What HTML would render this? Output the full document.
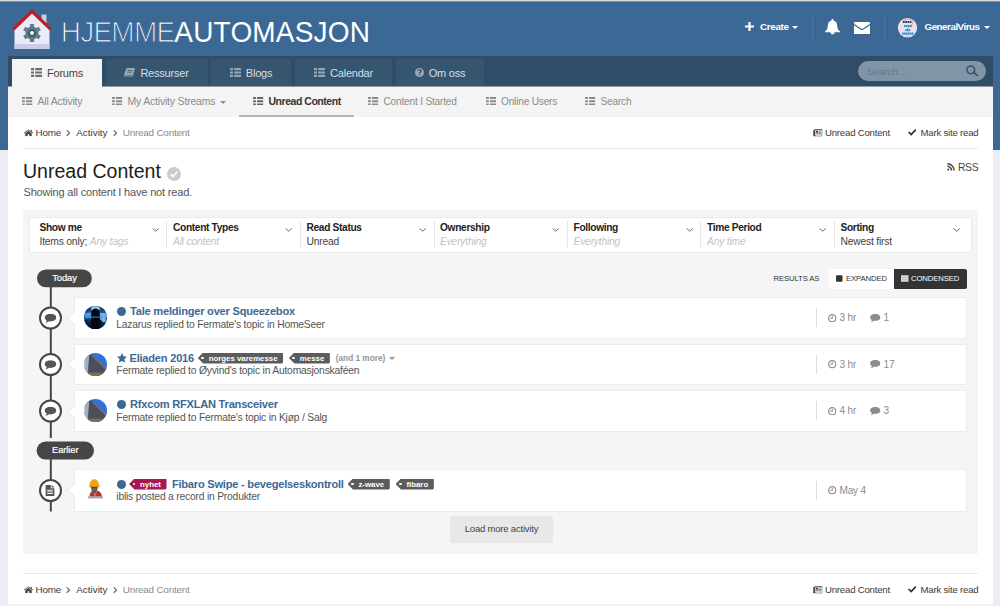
<!DOCTYPE html>
<html lang="no">
<head>
<meta charset="utf-8">
<title>Unread Content - Hjemmeautomasjon</title>
<style>
*{box-sizing:border-box;margin:0;padding:0}
html,body{width:1000px;height:606px;overflow:hidden}
body{font-family:"Liberation Sans",Arial,sans-serif;font-size:13px;color:#272a34;background:#eaedf3;position:relative}
a{color:inherit;text-decoration:none}
.abs{position:absolute}
#topline{left:0;top:0;width:1000px;height:2px;background:#dddbd9;border-bottom:1px solid #7591ae}
#header{left:0;top:1px;width:1000px;height:149px;background:#3b6895}
#logotext{left:60.8px;top:15.7px;font-size:28px;line-height:34px;color:#fff;white-space:nowrap;transform:scale(1,1.075);transform-origin:0 26px}
#logotext .bold{letter-spacing:.18px}
#logotext .thin{letter-spacing:-.78px;-webkit-text-stroke:1.15px #3b6895}
.un{color:#fff;font-size:9.8px;font-weight:bold;white-space:nowrap;line-height:14px;letter-spacing:-.3px}
.caret{display:inline-block;width:0;height:0;border-left:3px solid transparent;border-right:3px solid transparent;border-top:3.5px solid currentColor;vertical-align:middle;margin-left:3.5px}
.vsep{width:1px;height:26px;background:#4a75a0;top:14px}
#navbar{left:8px;top:56px;width:985px;height:30px;background:#304d68}
.tab{top:3px;height:27px;background:#36566f;color:#d8dfe6;font-size:11px;letter-spacing:-.21px;line-height:28px;text-align:center;white-space:nowrap}
.tab.active{background:#f4f4f4;color:#444;height:28px;z-index:3}
.tab svg{color:#98a7b6;vertical-align:-.3px;margin-right:5px}
.tab.active svg{color:#6e6e6e}
#search{left:850px;top:5px;width:128px;height:20px;border-radius:10px;background:#8294a7}
#search span{position:absolute;left:9px;top:.5px;line-height:20px;font-size:9.75px;color:#62768a}
#subnav{left:8px;top:86px;width:985px;height:31px;background:#f4f4f4;border-top:1px solid #929ba6}
.sub{top:0;height:30px;line-height:28.6px;font-size:10.5px;letter-spacing:-.2px;color:#8b8b8b;white-space:nowrap}
.sub svg{vertical-align:-.2px;margin-right:5px}
.sub.on{color:#333;font-weight:bold;letter-spacing:-.47px;border-bottom:2px solid #b5b5b5}
.sub.on svg{color:#666}
#main{left:8px;top:117px;width:985px;height:487px;background:#fff;border-bottom:1px solid #f4f5f9;box-sizing:content-box}
.crumb{font-size:9.9px;letter-spacing:-.2px;line-height:14px;color:#3a3a3a;white-space:nowrap}
.crumb .sep{margin:0 5.8px 0 5px;vertical-align:-.5px}
.crumb.r{font-size:9.6px}
.crumb .last{color:#8a8a8a}
.hr{height:1px;background:#e9e9e9}
h1{font-weight:normal;font-size:19.55px;line-height:28px;color:#1c1c1c;white-space:nowrap}
.desc{font-size:11.05px;letter-spacing:-.2px;line-height:14px;color:#555;white-space:nowrap}
#box{left:23px;top:210px;width:955px;height:344px;background:#f5f5f5}
#filter{left:29px;top:217px;width:943px;height:36px;background:#fff;border:1px solid #e9e9e9}
.fc{top:0;height:33px}
.fc b{position:absolute;left:0;top:2.5px;font-size:10.2px;letter-spacing:-.34px;line-height:13px;color:#222;white-space:nowrap}
.fc span{position:absolute;left:0;top:16.6px;font-size:10.3px;letter-spacing:-.2px;line-height:13px;color:#444;white-space:nowrap}
.fc i{color:#c3c3c3}
.fc .chev{position:absolute;top:10.3px}
.fsep{top:3px;width:1px;height:27px;background:#e9e9e9}
.pilltxt{color:#fff;font-size:9.4px;letter-spacing:-.1px;line-height:12px;text-align:center;-webkit-text-stroke:.2px #fff}
.item{left:74px;width:893px;background:#fff;border:1px solid #ececec}
.item .av{position:absolute;left:9px;width:23px;height:23px;border-radius:12px;overflow:hidden}
.item .ttl{position:absolute;left:41.5px;font-size:11.1px;letter-spacing:-.23px;font-weight:bold;line-height:14px;color:#3c6994;white-space:nowrap}
.item .meta{position:absolute;left:41.3px;font-size:10.3px;letter-spacing:-.2px;line-height:14px;color:#555;white-space:nowrap}
.item .isep{position:absolute;left:741px;width:1px;height:19px;background:#ddd}
.item .st{position:absolute;font-size:10.1px;letter-spacing:-.2px;line-height:14px;color:#8c8c8c;white-space:nowrap}
.dot{display:inline-block;width:9px;height:9px;border-radius:5px;background:#3c6994;vertical-align:-1px;margin-right:4.5px}
.tag{display:inline-block;position:relative;height:11px;line-height:11px;font-size:7.85px;letter-spacing:0;font-weight:bold;color:#fff;background:#5c5c5c;padding:0 5.6px 0 10.9px;margin-left:5.8px;vertical-align:1px;clip-path:polygon(5.4px 0,calc(100% - 1px) 0,100% 1px,100% calc(100% - 1px),calc(100% - 1px) 100%,5.4px 100%,0 50%)}
.tag.f{margin-left:3.8px}
.tag:after{content:"";position:absolute;left:3.4px;top:4.2px;width:2.6px;height:2.6px;border-radius:2px;background:#fff}
.tag.red{background:#a8174f}
.more{letter-spacing:0;font-size:8.25px;color:#959595;margin-left:5.9px;vertical-align:1px}
#loadmore{left:450px;top:516px;width:103px;height:27px;border-radius:3px;background:#e8e8e8;color:#444;font-size:9.5px;letter-spacing:-.2px;line-height:26px;text-align:center}
.tog{top:269px;height:20px;font-size:7.7px;letter-spacing:-.1px;line-height:20px;white-space:nowrap;color:#333}
</style>
</head>
<body>
<div id="header" class="abs"></div>
<div id="topline" class="abs"></div>
<svg width="0" height="0" style="position:absolute">
<defs>
<symbol id="i-list" viewBox="0 0 11 9"><path d="M0 0h3v2.200H0zM4.200 0H11v2.200H4.200zM0 3.400h3v2.200H0zM4.200 3.400H11v2.200H4.200zM0 6.800h3V9H0zM4.200 6.800H11V9H4.200z"/></symbol>
<symbol id="i-book" viewBox="0 0 11 9"><path d="M3.200 0H10.600c.3 0 .5.3.4.6L9 7.600c-.2.600-.6.900-1.200.900H1.200C.3 8.500-.2 7.800.1 7L2 1C2.200.4 2.600 0 3.200 0zM3.900 2.100l-.2.700h4.500l.2-.7zM3.400 3.700l-.2.700h4.500l.2-.7zM1 7c0 .4.200.6.600.6h6c.3 0 .5-.2.600-.5L10 1.500 8.400 6.300c-.1.400-.4.600-.8.600z"/></symbol>
<symbol id="i-q" viewBox="0 0 10 10"><path fill-rule="evenodd" d="M5 0a5 5 0 1 0 0 10A5 5 0 0 0 5 0zm.7 8.200H4.300V6.900h1.400zM6.900 4.600c-.5.400-1.100.7-1.100 1.500H4.300c0-1.300.6-1.800 1.200-2.200.4-.3.600-.5.600-.8 0-.4-.4-.7-1-.7-.7 0-1.100.4-1.200 1L2.500 3.200C2.700 2 3.700 1.300 5.100 1.300c1.500 0 2.500.7 2.500 1.800 0 .7-.3 1.200-.7 1.500z"/></symbol>
<symbol id="i-home" viewBox="0 0 10 8"><path d="M5 0L0 4.100l.5.600L5 1l4.500 3.700.5-.6L8.600 3V.6H7.400v1.400zM5 1.900L1.400 4.900V8h2.700V5.600h1.800V8h2.700V4.900z"/></symbol>
<symbol id="i-news" viewBox="0 0 10 8"><path fill-rule="evenodd" d="M1.600 0H10v7.200c0 .4-.3.800-.8.800H.9C.4 8 0 7.600 0 7.100V1.400h1.600zm.8.800v6.400h6.800V.8zM.8 2.200v4.900c0 .1.100.1.100.1.100 0 .1 0 .1-.1V2.200zM3.200 1.600h2.400v2.400H3.200zM6.400 1.600h2v.8h-2zM6.400 3.200h2V4h-2zM3.200 4.800h5.200v.8H3.200z"/></symbol>
<symbol id="i-check" viewBox="0 0 10 8"><path d="M3.700 7.800L0 4.100l1.400-1.400 2.300 2.300L8.600 0 10 1.400z"/></symbol>
<symbol id="i-rss" viewBox="0 0 8 8"><path d="M1.100 5.800a1.100 1.100 0 1 0 0 2.200 1.100 1.100 0 0 0 0-2.200zM0 2.700v1.500c2.100 0 3.800 1.700 3.800 3.800h1.500C5.300 5.100 2.900 2.700 0 2.700zM0 0v1.500c3.600 0 6.500 2.900 6.500 6.500H8C8 3.600 4.400 0 0 0z"/></symbol>
<symbol id="i-chev" viewBox="0 0 8 5"><path d="M.7.600L4 3.800 7.300.6" fill="none" stroke="currentColor" stroke-width="1.050"/></symbol>
<symbol id="i-clock" viewBox="0 0 10 10"><path fill-rule="evenodd" d="M5 0a5 5 0 1 0 0 10A5 5 0 0 0 5 0zm0 1.500a3.500 3.500 0 1 1 0 7 3.500 3.500 0 0 1 0-7zM4.400 2.400h1.200v3.200H2.900V4.500h1.500z"/></symbol>
<symbol id="i-comment" viewBox="0 0 11 9"><path d="M5.500 0C2.500 0 0 1.600 0 3.600c0 1.100.8 2.100 2 2.800-.2.800-.7 1.500-1.400 2.100 1.400-.1 2.600-.6 3.500-1.400.4.100.9.100 1.400.1 3 0 5.500-1.600 5.500-3.600S8.500 0 5.500 0z"/></symbol>
<symbol id="i-star" viewBox="0 0 10 10"><path d="M5 0l1.500 3.300 3.500.4-2.600 2.400.7 3.500L5 7.900 1.900 9.600l.7-3.500L0 3.700l3.500-.4z"/></symbol>
<symbol id="i-file" viewBox="0 0 8 10"><path fill-rule="evenodd" d="M0 0h4.700v2.900H8V10H0zM5.400 0L8 2.300H5.400zM1.600 4.400v.8h4.800v-.8zM1.600 5.900v.8h4.800v-.8zM1.600 7.400v.8h4.800v-.8z"/></symbol>
<symbol id="i-bell" viewBox="0 0 15 16"><path d="M7.500 0c-.6 0-1 .4-1 1v.5C4.200 2 2.800 4 2.800 6.500c0 3.300-1.100 4.700-2.800 6v.7h5.400c0 1.200.9 2.100 2.100 2.100s2.100-.9 2.100-2.100H15v-.7c-1.700-1.300-2.800-2.700-2.800-6C12.200 4 10.800 2 8.500 1.500V1c0-.6-.4-1-1-1z"/></symbol>
<symbol id="i-env" viewBox="0 0 16 13"><path d="M1.300 0h13.400c.7 0 1.300.6 1.300 1.300v.5L9.100 6.700c-.7.500-1.500.5-2.200 0L0 1.800v-.5C0 .6.600 0 1.300 0zM0 3.300l6.300 4.500c1 .7 2.400.7 3.400 0L16 3.300v8.400c0 .7-.6 1.300-1.300 1.300H1.300C.6 13 0 12.400 0 11.700z"/></symbol>
<symbol id="i-search" viewBox="0 0 12 11"><circle cx="4.600" cy="4.600" r="3.700" fill="none" stroke="currentColor" stroke-width="1.500"/><path d="M7.300 7.100l3.800 3.200" stroke="currentColor" stroke-width="1.700" stroke-linecap="round"/></symbol>
</defs></svg>
<svg class="abs" viewBox="0 0 40 42" style="left:11.5px;top:9px;width:40px;height:42px">
<rect x="29.500" y="5.500" width="5" height="11" fill="#c9cbe8"/>
<path d="M2.500 20.800L20 3.300 37.500 20.800V40H2.500z" fill="#ebebf8"/>
<rect x="2.500" y="35" width="35" height="5" fill="#c9cbe8"/>
<path d="M1.300 20.300L20 2.300 38.700 20.300" fill="none" stroke="#c21a1e" stroke-width="3"/>
<g transform="translate(20 24)">
<g fill="#607d8b">
<circle r="6.600"/>
<rect x="-2.100" y="-9" width="4.200" height="18" rx=".6"/>
<rect x="-2.100" y="-9" width="4.200" height="18" rx=".6" transform="rotate(60)"/>
<rect x="-2.100" y="-9" width="4.200" height="18" rx=".6" transform="rotate(120)"/>
</g>
<circle r="4" fill="#455a64"/>
<circle r="2" fill="#f1f1fa"/>
</g>
</svg>
<div id="logotext" class="abs"><span class="thin">HJEMME</span><span class="bold">AUTOMASJON</span></div>
<div class="abs un" style="left:745px;top:20px"><svg width="9" height="9" viewBox="0 0 9 9" style="vertical-align:-1px;margin-right:6px"><path d="M3.400 0h2.200v3.400H9v2.200H5.600V9H3.400V5.600H0V3.400h3.400z" fill="#fff"/></svg><span>Create</span><span class="caret"></span></div>
<div class="abs vsep" style="left:812px"></div>
<svg class="abs" style="left:825px;top:19px;width:15px;height:16px;fill:#fff"><use href="#i-bell"/></svg>
<svg class="abs" style="left:854px;top:21.5px;width:16px;height:12.600px;fill:#fff" viewBox="0 0 16 13" preserveAspectRatio="none"><use href="#i-env"/></svg>
<div class="abs vsep" style="left:884px"></div>
<svg class="abs" style="left:896px;top:16px;width:24px;height:24px" viewBox="896 16 24 24"><circle cx="907.500" cy="27.800" r="9.700" fill="#e6e3ea"/><path d="M902.800 22.500c.5-2.500 3-3.500 5.500-3.300 2.800.2 4.500 1.800 4.200 4-.3 2-2.500 2.700-3.800 3.900-1 .9-1.300 1.800-1.300 3.300" fill="none" stroke="#f0a3ab" stroke-width="1.300"/><circle cx="907.300" cy="35.800" r=".9" fill="#f0a3ab"/><path d="M903 22h8.800" stroke="#2a3d6e" stroke-width="2.200" stroke-dasharray="1.700 .5"/><path d="M904 26h7.700" stroke="#2b8fc8" stroke-width="2.200" stroke-dasharray="1.600 .45"/><path d="M905.200 30.200h5" stroke="#1f8fd0" stroke-width="2.200" stroke-dasharray="1.400 .4"/><path d="M902.200 33.700h11.200" stroke="#2389c6" stroke-width="2.200" stroke-dasharray="1.500 .45"/></svg>
<div class="abs un" style="left:924.5px;top:20px"><span style="letter-spacing:-.48px">GeneralVirus</span><span class="caret" style="margin-left:4.500px"></span></div>
<div id="navbar" class="abs"><a class="abs tab active" style="left:4px;width:90px"><svg width="11" height="9" fill="currentColor"><use href="#i-list"/></svg><span>Forums</span></a><a class="abs tab" style="left:97.5px;width:102px"><svg width="11" height="9" fill="currentColor"><use href="#i-book"/></svg><span>Ressurser</span></a><a class="abs tab" style="left:203px;width:80px"><svg width="11" height="9" fill="currentColor"><use href="#i-list"/></svg><span>Blogs</span></a><a class="abs tab" style="left:287px;width:97px"><svg width="11" height="9" fill="currentColor"><use href="#i-list"/></svg><span>Calendar</span></a><a class="abs tab" style="left:388px;width:88px"><svg width="9" height="9" fill="currentColor"><use href="#i-q"/></svg><span>Om oss</span></a><div id="search" class="abs"><span>Search...</span><svg class="abs" style="left:108px;top:3.7px;width:12.5px;height:11.5px;color:#3a5167"><use href="#i-search"/></svg></div></div>
<div id="subnav" class="abs"><a class="abs sub" style="left:14px"><svg width="10.5" height="8.5" fill="currentColor" viewBox="0 0 11 9"><use href="#i-list"/></svg><span>All Activity</span></a><a class="abs sub" style="left:104px"><svg width="10.5" height="8.5" fill="currentColor" viewBox="0 0 11 9"><use href="#i-list"/></svg><span>My Activity Streams</span><span class="caret" style="margin-left:4.7px"></span></a><a class="abs sub on" style="left:231px;width:115px;padding-left:14px"><svg width="10.5" height="8.5" fill="currentColor" viewBox="0 0 11 9"><use href="#i-list"/></svg><span>Unread Content</span></a><a class="abs sub" style="left:360px;font-size:10.15px;line-height:30.6px"><svg width="10.5" height="8.5" fill="currentColor" viewBox="0 0 11 9"><use href="#i-list"/></svg><span>Content I Started</span></a><a class="abs sub" style="left:477.5px;font-size:10.15px;line-height:30.6px"><svg width="10.5" height="8.5" fill="currentColor" viewBox="0 0 11 9"><use href="#i-list"/></svg><span>Online Users</span></a><a class="abs sub" style="left:577px;font-size:10.15px;line-height:30.6px"><svg width="10.5" height="8.5" fill="currentColor" viewBox="0 0 11 9"><use href="#i-list"/></svg><span>Search</span></a></div>
<div id="main" class="abs"></div>
<div class="abs crumb" style="left:23.5px;top:126px"><svg width="9" height="7.500" viewBox="0 0 10 8" fill="#444" style="vertical-align:-.5px;margin-right:3px"><use href="#i-home"/></svg><span>Home</span><svg class="sep" width="4.400" height="6.200" viewBox="0 0 4.400 6.200"><path d="M.7.400l2.900 2.700L.7 5.800" fill="none" stroke="#606060" stroke-width="1.150"/></svg><span style="letter-spacing:0">Activity</span><svg class="sep" width="4.400" height="6.200" viewBox="0 0 4.400 6.200"><path d="M.7.400l2.900 2.700L.7 5.800" fill="none" stroke="#606060" stroke-width="1.150"/></svg><span class="last">Unread Content</span></div>
<div class="abs crumb r" style="left:813px;top:126px"><svg width="9.500" height="7.500" viewBox="0 0 10 8" fill="#444" style="vertical-align:-.5px;margin-right:2.500px"><use href="#i-news"/></svg><span>Unread Content</span></div>
<div class="abs crumb r" style="left:907.5px;top:126px"><svg width="8.500" height="7" viewBox="0 0 10 8" fill="#333" style="vertical-align:0;margin-right:4.500px"><use href="#i-check"/></svg><span>Mark site read</span></div>
<div class="abs hr" style="left:23px;top:148px;width:955px"></div>
<h1 class="abs" style="left:23px;top:156.6px">Unread Content</h1>
<svg class="abs" style="left:167px;top:166.5px;width:14px;height:14px" viewBox="0 0 14 14"><circle cx="7" cy="7" r="7" fill="#cbcbcb"/><path d="M3.600 7.200l2.300 2.300 4.400-4.600" fill="none" stroke="#fff" stroke-width="1.700"/></svg>
<div class="abs desc" style="left:23.5px;top:185px">Showing all content I have not read.</div>
<div class="abs" style="left:946.7px;top:160.5px;font-size:10.3px;line-height:14px;color:#444;white-space:nowrap;letter-spacing:-.3px"><svg width="8.100" height="7.700" viewBox="0 0 8 8" fill="#444" style="margin-right:3.2px;vertical-align:-.3px"><use href="#i-rss"/></svg>RSS</div>
<div id="box" class="abs"></div>
<div id="filter" class="abs"><div class="abs fc" style="left:9.5px;width:124px"><b>Show me</b><span>Items only; <i><em>Any tags</em></i></span><svg class="chev" style="left:112.2px;color:#5a5a5a" width="7.400" height="4.200" viewBox="0 0 8 5" preserveAspectRatio="none"><use href="#i-chev"/></svg></div><div class="abs fsep" style="left:136px"></div><div class="abs fc" style="left:143.0px;width:124px"><b>Content Types</b><span><i><em>All content</em></i></span><svg class="chev" style="left:112.2px;color:#5a5a5a" width="7.400" height="4.200" viewBox="0 0 8 5" preserveAspectRatio="none"><use href="#i-chev"/></svg></div><div class="abs fsep" style="left:270px"></div><div class="abs fc" style="left:276.5px;width:124px"><b>Read Status</b><span>Unread</span><svg class="chev" style="left:112.2px;color:#5a5a5a" width="7.400" height="4.200" viewBox="0 0 8 5" preserveAspectRatio="none"><use href="#i-chev"/></svg></div><div class="abs fsep" style="left:404px"></div><div class="abs fc" style="left:410.0px;width:124px"><b>Ownership</b><span><i><em>Everything</em></i></span><svg class="chev" style="left:112.2px;color:#5a5a5a" width="7.400" height="4.200" viewBox="0 0 8 5" preserveAspectRatio="none"><use href="#i-chev"/></svg></div><div class="abs fsep" style="left:537px"></div><div class="abs fc" style="left:543.5px;width:124px"><b>Following</b><span><i><em>Everything</em></i></span><svg class="chev" style="left:112.2px;color:#5a5a5a" width="7.400" height="4.200" viewBox="0 0 8 5" preserveAspectRatio="none"><use href="#i-chev"/></svg></div><div class="abs fsep" style="left:670px"></div><div class="abs fc" style="left:677.0px;width:124px"><b>Time Period</b><span><i><em>Any time</em></i></span><svg class="chev" style="left:112.2px;color:#5a5a5a" width="7.400" height="4.200" viewBox="0 0 8 5" preserveAspectRatio="none"><use href="#i-chev"/></svg></div><div class="abs fsep" style="left:804px"></div><div class="abs fc" style="left:810.5px;width:124px"><b>Sorting</b><span>Newest first</span><svg class="chev" style="left:112.2px;color:#5a5a5a" width="7.400" height="4.200" viewBox="0 0 8 5" preserveAspectRatio="none"><use href="#i-chev"/></svg></div></div>
<svg class="abs" style="left:0;top:260px;width:110px;height:260px" viewBox="0 260 110 260"><rect x="49.800" y="280" width="2" height="158" fill="#464646"/><rect x="49.800" y="452" width="2" height="59.500" fill="#464646"/><rect x="37" y="269.5" width="54.8" height="17.80000000000001" rx="8.900000000000006" fill="#464646"/><rect x="36.6" y="441.6" width="57.4" height="18.0" rx="9.0" fill="#464646"/><circle cx="50.500" cy="318" r="10.500" fill="#fff" stroke="#464646" stroke-width="2"/><svg x="44.500" y="313.7" width="12" height="9.600" viewBox="0 0 11 9" fill="#555"><use href="#i-comment"/></svg><circle cx="50.500" cy="364.5" r="10.500" fill="#fff" stroke="#464646" stroke-width="2"/><svg x="44.500" y="360.2" width="12" height="9.600" viewBox="0 0 11 9" fill="#555"><use href="#i-comment"/></svg><circle cx="50.500" cy="411" r="10.500" fill="#fff" stroke="#464646" stroke-width="2"/><svg x="44.500" y="406.7" width="12" height="9.600" viewBox="0 0 11 9" fill="#555"><use href="#i-comment"/></svg><circle cx="50.500" cy="490.5" r="10.500" fill="#fff" stroke="#464646" stroke-width="2"/><svg x="45.400" y="485.1" width="9.200" height="10.800" viewBox="0 0 8 10" preserveAspectRatio="none" fill="#555"><use href="#i-file"/></svg></svg>
<div class="abs pilltxt" style="left:37px;top:272px;width:55px">Today</div>
<div class="abs pilltxt" style="left:36.5px;top:444px;width:57.5px">Earlier</div>
<div class="abs tog" style="left:773.5px">RESULTS AS</div>
<div class="abs tog" style="left:829px;width:65px;background:#fff;border-radius:2px 0 0 2px;padding-left:7px"><svg width="6.500" height="7" viewBox="0 0 7 7" style="margin-right:3.500px;vertical-align:-1px"><rect width="7" height="7" rx="1.200" fill="#333"/></svg>EXPANDED</div>
<div class="abs tog" style="left:894px;width:73px;background:#333;color:#fff;border-radius:0 2px 2px 0;padding-left:7px"><svg width="7.500" height="7" viewBox="0 0 8 7" style="margin-right:2.500px;vertical-align:-1px"><rect width="8" height="7" fill="#d6d6e2"/><path d="M0 2.300h8M0 4.600h8" stroke="#bcbcd0" stroke-width=".6"/></svg>CONDENSED</div>
<div class="abs item" style="top:297px;height:42px"><svg class="av" style="top:8.3px" viewBox="0 0 24 24"><rect width="24" height="24" fill="#15508f"/><ellipse cx="12" cy="2.500" rx="4.500" ry="2.200" fill="#a9cff2"/><ellipse cx="5.500" cy="9.800" rx="5" ry="3" fill="#4f97dc"/><ellipse cx="19" cy="10" rx="5" ry="3" fill="#6fb0ea"/><ellipse cx="19.500" cy="14.500" rx="3.500" ry="2.600" fill="#9cc6ee" opacity=".8"/><path d="M0 0h9L4 5 0 7zM24 0h-9l4 4 5 2z" fill="#0a2348" opacity=".8"/><path d="M0 24V15l5-2v11zM24 24v-5l-4-2.500V24z" fill="#0a2449"/><path d="M3.500 24C4 17 6.500 14 8 13.500h8c3 1 4.200 4 4.500 10.500z" fill="#0a1c36"/><path d="M7.500 24V9C7.500 4.500 9.500 2.500 12 2.500s4.500 2 4.500 6.500v15z" fill="#030812"/><rect x="4.500" y="11" width="15" height="1.200" fill="#2f80d8" opacity=".9"/></svg><div class="ttl" style="top:6px"><span class="dot"></span>Tale meldinger over Squeezebox</div><div class="meta" style="top:19.5px">Lazarus replied to Fermate's topic in HomeSeer</div><div class="isep" style="top:10px"></div><div class="st" style="left:753px;top:13px"><svg width="8.500" height="8.500" viewBox="0 0 10 10" fill="#8c8c8c" style="vertical-align:-1px;margin-right:3px"><use href="#i-clock"/></svg>3 hr</div><div class="st" style="left:795px;top:13px"><svg width="10.500" height="8.500" viewBox="0 0 11 9" fill="#8c8c8c" style="vertical-align:-1px;margin-right:3px"><use href="#i-comment"/></svg>1</div></div><svg class="abs" style="left:66.5px;top:310.5px;width:9px;height:15px" viewBox="0 0 9 15"><path d="M9 .5L1 7.500l8 7z" fill="#fff"/><path d="M8.500 .5L1.200 7.500l7.300 7" fill="none" stroke="#e9e9e9" stroke-width="1"/></svg>
<div class="abs item" style="top:344px;height:41px"><svg class="av" style="top:7.800000000000001px" viewBox="0 0 24 24"><rect width="24" height="24" fill="#2f72dc"/><path d="M0 24V4l5.500-2L4 24z" fill="#a9abb3"/><path d="M5.500 2l3-.5L24 17v7H4z" fill="#4b4e5b"/><path d="M7.500 2.500L10 3l14 12.500V19z" fill="#6d707b"/><rect y="20.500" width="24" height="3.500" fill="#6f7a4a"/><path d="M0 24V9l1.500-1L1 24z" fill="#c9cad0"/></svg><div class="ttl" style="top:5.5px"><svg width="10" height="10" viewBox="0 0 10 10" fill="#3c6994" style="vertical-align:-1px;margin-right:3px"><use href="#i-star"/></svg>Eliaden 2016<span class="tag f">norges varemesse</span><span class="tag">messe</span><span class="more">(and 1 more)<span class="caret"></span></span></div><div class="meta" style="top:19.0px">Fermate replied to Øyvind's topic in Automasjonskaféen</div><div class="isep" style="top:10px"></div><div class="st" style="left:753px;top:12.5px"><svg width="8.500" height="8.500" viewBox="0 0 10 10" fill="#8c8c8c" style="vertical-align:-1px;margin-right:3px"><use href="#i-clock"/></svg>3 hr</div><div class="st" style="left:795px;top:12.5px"><svg width="10.500" height="8.500" viewBox="0 0 11 9" fill="#8c8c8c" style="vertical-align:-1px;margin-right:3px"><use href="#i-comment"/></svg>17</div></div><svg class="abs" style="left:66.5px;top:357.0px;width:9px;height:15px" viewBox="0 0 9 15"><path d="M9 .5L1 7.500l8 7z" fill="#fff"/><path d="M8.500 .5L1.200 7.500l7.300 7" fill="none" stroke="#e9e9e9" stroke-width="1"/></svg>
<div class="abs item" style="top:390px;height:42px"><svg class="av" style="top:8.3px" viewBox="0 0 24 24"><rect width="24" height="24" fill="#2f72dc"/><path d="M0 24V4l5.500-2L4 24z" fill="#a9abb3"/><path d="M5.500 2l3-.5L24 17v7H4z" fill="#4b4e5b"/><path d="M7.500 2.500L10 3l14 12.500V19z" fill="#6d707b"/><rect y="20.500" width="24" height="3.500" fill="#6f7a4a"/><path d="M0 24V9l1.500-1L1 24z" fill="#c9cad0"/></svg><div class="ttl" style="top:6px"><span class="dot"></span>Rfxcom RFXLAN Transceiver</div><div class="meta" style="top:19.5px">Fermate replied to Fermate's topic in Kjøp / Salg</div><div class="isep" style="top:10px"></div><div class="st" style="left:753px;top:13px"><svg width="8.500" height="8.500" viewBox="0 0 10 10" fill="#8c8c8c" style="vertical-align:-1px;margin-right:3px"><use href="#i-clock"/></svg>4 hr</div><div class="st" style="left:795px;top:13px"><svg width="10.500" height="8.500" viewBox="0 0 11 9" fill="#8c8c8c" style="vertical-align:-1px;margin-right:3px"><use href="#i-comment"/></svg>3</div></div><svg class="abs" style="left:66.5px;top:403.5px;width:9px;height:15px" viewBox="0 0 9 15"><path d="M9 .5L1 7.500l8 7z" fill="#fff"/><path d="M8.500 .5L1.200 7.500l7.300 7" fill="none" stroke="#e9e9e9" stroke-width="1"/></svg>
<div class="abs item" style="top:469px;height:43px"><svg class="abs" viewBox="80 474 32 32" style="left:5px;top:4px;width:32px;height:32px"><path d="M89.500 496.500c.2-3.500 1.500-5 3-5.500l2 4 2.500-4.500c3 .5 4.500 2.500 5 6z" fill="#c32a2a"/><path d="M97 490.500l-2 5.500" stroke="#b58a5a" stroke-width="1" fill="none"/><rect x="91.200" y="486.500" width="6.400" height="3.500" fill="#c99c78"/><path d="M91.300 489.300h6l-1 3.200-2 1.700-2-1.700z" fill="#6b5a4c"/><rect x="91.200" y="487" width="6.200" height="1.600" fill="#2b2b30"/><path d="M89.500 486.500c0-5 2-7.200 4.800-7.200 2.900 0 4.700 2.200 4.700 7.200z" fill="#eea51e"/><rect x="89" y="485.800" width="10.600" height="1.400" rx=".7" fill="#d99414"/><rect x="88" y="496.400" width="15" height="2" fill="#8d8d8d" opacity=".8"/></svg><div class="ttl" style="top:6.5px"><span class="dot"></span><span class="tag red" style="margin-left:-.9px;margin-right:5.4px">nyhet</span>Fibaro Swipe - bevegelseskontroll<span class="tag f">z-wave</span><span class="tag">fibaro</span></div><div class="meta" style="top:20.0px">iblis posted a record in Produkter</div><div class="isep" style="top:11px"></div><div class="st" style="left:753px;top:13.5px"><svg width="8.500" height="8.500" viewBox="0 0 10 10" fill="#8c8c8c" style="vertical-align:-1px;margin-right:3px"><use href="#i-clock"/></svg>May 4</div></div><svg class="abs" style="left:66.5px;top:483.0px;width:9px;height:15px" viewBox="0 0 9 15"><path d="M9 .5L1 7.500l8 7z" fill="#fff"/><path d="M8.500 .5L1.200 7.500l7.300 7" fill="none" stroke="#e9e9e9" stroke-width="1"/></svg>
<div id="loadmore" class="abs">Load more activity</div>
<div class="abs hr" style="left:23px;top:573px;width:955px"></div>
<div class="abs crumb" style="left:23.5px;top:583px"><svg width="9" height="7.500" viewBox="0 0 10 8" fill="#444" style="vertical-align:-.5px;margin-right:3px"><use href="#i-home"/></svg><span>Home</span><svg class="sep" width="4.400" height="6.200" viewBox="0 0 4.400 6.200"><path d="M.7.400l2.900 2.700L.7 5.800" fill="none" stroke="#606060" stroke-width="1.150"/></svg><span style="letter-spacing:0">Activity</span><svg class="sep" width="4.400" height="6.200" viewBox="0 0 4.400 6.200"><path d="M.7.400l2.900 2.700L.7 5.800" fill="none" stroke="#606060" stroke-width="1.150"/></svg><span class="last">Unread Content</span></div>
<div class="abs crumb r" style="left:813px;top:583px"><svg width="9.500" height="7.500" viewBox="0 0 10 8" fill="#444" style="vertical-align:-.5px;margin-right:2.500px"><use href="#i-news"/></svg><span>Unread Content</span></div>
<div class="abs crumb r" style="left:907.5px;top:583px"><svg width="8.500" height="7" viewBox="0 0 10 8" fill="#333" style="vertical-align:0;margin-right:4.500px"><use href="#i-check"/></svg><span>Mark site read</span></div>
</body>
</html>
